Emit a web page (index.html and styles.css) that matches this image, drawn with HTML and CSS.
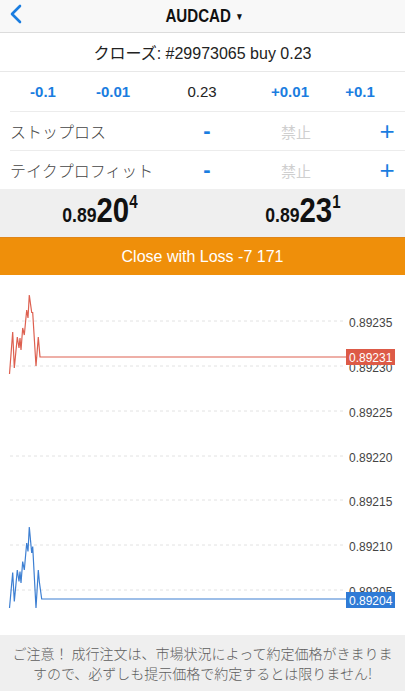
FILE: index.html
```html
<!DOCTYPE html>
<html lang="ja">
<head>
    <meta charset="UTF-8">
    <meta name="viewport" content="width=device-width, initial-scale=1.0">
    <title>AUDCAD - Close</title>
    <link rel="stylesheet" href="styles.css">
</head>
<body>
    <div class="screen">
        <header class="topbar">
            <a class="back" href="#">
                <svg width="14" height="22" viewBox="0 0 14 22"><path d="M11 3 L3 11 L11 19" fill="none" stroke="#1a7de0" stroke-width="2.6" stroke-linecap="round" stroke-linejoin="round"/></svg>
            </a>
            <div class="symbol">AUDCAD <span class="caret">&#9660;</span></div>
        </header>

        <div class="order-title">クローズ: #29973065 buy 0.23</div>

        <div class="volume-row">
            <span class="step">-0.1</span>
            <span class="step">-0.01</span>
            <span class="volume">0.23</span>
            <span class="step">+0.01</span>
            <span class="step">+0.1</span>
        </div>

        <div class="level-row">
            <span class="level-label">ストップロス</span>
            <span class="minus">-</span>
            <span class="level-value">禁止</span>
            <span class="plus">+</span>
        </div>
        <div class="level-row last">
            <span class="level-label">テイクプロフィット</span>
            <span class="minus">-</span>
            <span class="level-value">禁止</span>
            <span class="plus">+</span>
        </div>

        <div class="quotes">
            <div class="quote"><span class="q-inner"><span class="q-small">0.89</span><span class="q-big">20</span><span class="q-sup">4</span></span></div>
            <div class="quote"><span class="q-inner"><span class="q-small">0.89</span><span class="q-big">23</span><span class="q-sup">1</span></span></div>
        </div>

        <button class="close-btn">Close with Loss -7 171</button>

        <div class="chart">
            <svg width="405" height="360" viewBox="0 275 405 360">
                <g class="grid">
                    <line x1="10" y1="321" x2="345" y2="321"/>
                    <line x1="10" y1="366" x2="345" y2="366"/>
                    <line x1="10" y1="411" x2="345" y2="411"/>
                    <line x1="10" y1="456" x2="345" y2="456"/>
                    <line x1="10" y1="500" x2="345" y2="500"/>
                    <line x1="10" y1="545" x2="345" y2="545"/>
                    <line x1="10" y1="590" x2="345" y2="590"/>
                </g>
                <g class="axis">
                    <text x="349" y="327">0.89235</text>
                    <text x="349" y="372">0.89230</text>
                    <text x="349" y="417">0.89225</text>
                    <text x="349" y="462">0.89220</text>
                    <text x="349" y="506">0.89215</text>
                    <text x="349" y="551">0.89210</text>
                    <text x="349" y="596">0.89205</text>
                </g>
                <polyline class="ask" points="9.5,374 12.7,332 14.3,368 17.3,337 19,348 20,338 21,350 22.7,328 24.3,335 26.7,310 28,318 29.3,295 31.7,312.5 32.7,312.5 36,366 38.3,337 40,357 346,357"/>
                <polyline class="bid" points="9.5,608 12.7,572.5 14.3,601.5 17.3,570 19,581.5 20,571.5 21,583 22.7,561.5 24.3,570 26.7,543 28,551.5 29.3,527 31.7,553 32.7,546.5 36,608 38.3,570 39.3,581.5 41.7,599 346,599"/>
                <rect x="346" y="349" width="49" height="16" fill="#dd5a47"/>
                <text class="tag" x="349" y="362">0.89231</text>
                <rect x="346" y="592" width="49" height="16" fill="#2f7bd6"/>
                <text class="tag" x="349" y="605">0.89204</text>
            </svg>
        </div>

        <footer class="notice">
            ご注意！ 成行注文は、市場状況によって約定価格がきまりま<br>すので、必ずしも提示価格で約定するとは限りません!
        </footer>
    </div>
</body>
</html>
```

FILE: styles.css
```css
body {
    margin: 0;
    padding: 0;
    background-color: #fff;
    font-family: "Liberation Sans", Arial, "Noto Sans CJK JP", sans-serif;
    color: #222;
}
.screen {
    width: 405px;
    height: 691px;
    overflow: hidden;
    display: flex;
    flex-direction: column;
}
.topbar {
    height: 32px;
    flex: none;
    display: flex;
    align-items: center;
    justify-content: center;
    position: relative;
    background-color: #f8f8f8;
    border-bottom: 1px solid #dcdcdc;
}
.back {
    position: absolute;
    left: 9px;
    top: 3px;
}
.symbol {
    font-weight: bold;
    font-size: 18px;
    color: #111;
    margin-left: 4px;
    transform: scaleX(0.84);
}
.caret {
    font-size: 10px;
    vertical-align: 2px;
}
.order-title {
    height: 38px;
    flex: none;
    display: flex;
    align-items: center;
    justify-content: center;
    font-size: 16px;
    border-bottom: 1px solid #e8e8e8;
}
.volume-row {
    height: 39px;
    flex: none;
    display: grid;
    grid-template-columns: 66px 74px 104px 72px 68px;
    align-items: center;
    justify-items: center;
    border-bottom: 1px solid #ececec;
    margin-left: 10px;
    font-size: 15px;
}
.step {
    color: #1a7de0;
    font-weight: bold;
}
.volume {
    color: #222;
}
.level-row {
    height: 38px;
    flex: none;
    margin-left: 10px;
    display: grid;
    grid-template-columns: 188px 18px 1fr 22px;
    align-items: center;
    border-bottom: 1px solid #ececec;
    padding-right: 7px;
}
.level-row.last {
    border-bottom: none;
}
.level-label {
    font-size: 16px;
    color: #444;
    font-family: "Noto Sans CJK JP", sans-serif;
    font-weight: 300;
}
.minus {
    color: #1a7de0;
    font-size: 22px;
    font-weight: bold;
    text-align: center;
}
.plus {
    color: #1a7de0;
    font-size: 26px;
    text-align: center;
}
.level-value {
    text-align: center;
    color: #cfcfcf;
    font-size: 15px;
    font-family: "Noto Sans CJK JP", sans-serif;
}
.quotes {
    height: 48px;
    flex: none;
    background-color: #efefef;
    display: grid;
    grid-template-columns: 200px 205px;
    align-items: end;
}
.quote {
    text-align: center;
    font-weight: bold;
    color: #111;
    line-height: 1;
    padding-bottom: 10px;
}
.q-inner {
    display: inline-block;
    transform: scaleX(0.84);
}
.q-small {
    font-size: 21px;
}
.q-big {
    font-size: 35px;
}
.q-sup {
    font-size: 18px;
    vertical-align: 14px;
}
.close-btn {
    height: 38px;
    flex: none;
    border: none;
    margin: 0;
    background-color: #ef8f0a;
    color: #fff;
    font-family: "Liberation Sans", Arial, sans-serif;
    font-size: 16px;
    border-top: 1px solid #e0861a;
}
.chart {
    height: 360px;
    flex: none;
}
.chart svg {
    display: block;
}
.grid line {
    stroke: #e2e2e2;
    stroke-width: 1;
    stroke-dasharray: 3 3;
}
.axis text {
    font-size: 12px;
    fill: #444;
    font-family: "Liberation Sans", Arial, sans-serif;
}
.ask {
    fill: none;
    stroke: #dd6050;
    stroke-width: 1.2;
}
.bid {
    fill: none;
    stroke: #3d7fd2;
    stroke-width: 1.2;
}
.tag {
    font-size: 12px;
    fill: #fff;
    font-family: "Liberation Sans", Arial, sans-serif;
}
.notice {
    flex: 1;
    background-color: #efefef;
    color: #5e5e5e;
    font-family: "Noto Sans CJK JP", sans-serif;
    font-size: 14px;
    line-height: 20px;
    text-align: center;
    padding-top: 8px;
    font-weight: 300;
}
```
